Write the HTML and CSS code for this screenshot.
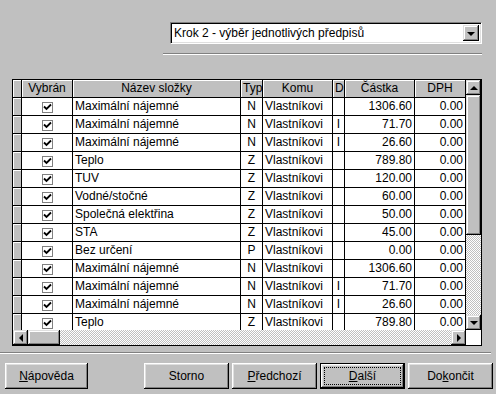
FILE: index.html
```html
<!DOCTYPE html>
<html lang="cs">
<head>
    <meta charset="UTF-8">
    <meta name="viewport" content="width=device-width, initial-scale=1.0">
    <title>Průvodce předpisy</title>
    <link rel="stylesheet" href="styles.css">
</head>
<body>

<div class="combo">
    <span class="combo-text">Krok 2 - výběr jednotlivých předpisů</span>
    <span class="combo-btn"><span class="tri tri-down"></span></span>
</div>
<div class="sep sep-top"></div>

<div class="grid">
    <div class="grid-body" id="grid-body">
        <div class="row head">
            <div class="cell ind"></div>
            <div class="cell">Vybrán</div>
            <div class="cell">Název složky</div>
            <div class="cell">Typ</div>
            <div class="cell">Komu</div>
            <div class="cell">D</div>
            <div class="cell">Částka</div>
            <div class="cell">DPH</div>
        </div>
    </div>
    <div class="vscroll">
        <span class="sbtn"><span class="tri tri-up"></span></span>
        <span class="thumb thumb-v"></span>
        <span class="track"></span>
        <span class="sbtn"><span class="tri tri-down"></span></span>
    </div>
    <div class="hscroll">
        <span class="sbtn"><span class="tri tri-left"></span></span>
        <span class="thumb thumb-h"></span>
        <span class="track"></span>
        <span class="sbtn"><span class="tri tri-right"></span></span>
    </div>
    <div class="corner"></div>
</div>

<div class="sep sep-bottom"></div>

<div class="buttons">
    <button class="btn btn-help"><span class="label"><u>N</u>ápověda</span></button>
    <button class="btn btn-cancel"><span class="label">Storno</span></button>
    <button class="btn"><span class="label"><u>P</u>ředchozí</span></button>
    <button class="btn btn-default"><span class="label"><u>D</u>alší</span></button>
    <button class="btn"><span class="label">Do<u>k</u>ončit</span></button>
</div>

<script>
    const items = [
        { name: 'Maximální nájemné', typ: 'N', d: '', castka: '1306.60' },
        { name: 'Maximální nájemné', typ: 'N', d: 'I', castka: '71.70' },
        { name: 'Maximální nájemné', typ: 'N', d: 'I', castka: '26.60' },
        { name: 'Teplo', typ: 'Z', d: '', castka: '789.80' },
        { name: 'TUV', typ: 'Z', d: '', castka: '120.00' },
        { name: 'Vodné/stočné', typ: 'Z', d: '', castka: '60.00' },
        { name: 'Společná elektřina', typ: 'Z', d: '', castka: '50.00' },
        { name: 'STA', typ: 'Z', d: '', castka: '45.00' },
        { name: 'Bez určení', typ: 'P', d: '', castka: '0.00' },
        { name: 'Maximální nájemné', typ: 'N', d: '', castka: '1306.60' },
        { name: 'Maximální nájemné', typ: 'N', d: 'I', castka: '71.70' },
        { name: 'Maximální nájemné', typ: 'N', d: 'I', castka: '26.60' },
        { name: 'Teplo', typ: 'Z', d: '', castka: '789.80' }
    ];

    const check = '<span class="chk"><svg width="9" height="9" viewBox="0 0 9 9">' +
        '<path d="M1 3.5 L3.5 6 L8 1.5" fill="none" stroke="#000" stroke-width="1.8"/></svg></span>';

    const body = document.getElementById('grid-body');
    items.forEach((item) => {
        const row = document.createElement('div');
        row.className = 'row';
        row.innerHTML = `<div class="cell ind"></div>
            <div class="cell c">${check}</div>
            <div class="cell">${item.name}</div>
            <div class="cell c">${item.typ}</div>
            <div class="cell">Vlastníkovi</div>
            <div class="cell c">${item.d}</div>
            <div class="cell r">${item.castka}</div>
            <div class="cell r">0.00</div>`;
        body.appendChild(row);
    });
</script>

</body>
</html>
```

FILE: styles.css
```css
body {
    font-family: "Liberation Sans", Arial, sans-serif;
    font-size: 12px;
    background-color: #c0c0c0;
    color: #000;
    margin: 0;
    padding: 0;
}

/* combo box */
.combo {
    margin: 22px 0 0 170px;
    width: 312px;
    height: 22px;
    box-sizing: border-box;
    background-color: #fff;
    border-top: 1px solid #808080;
    border-left: 1px solid #808080;
    border-right: 1px solid #fff;
    border-bottom: 1px solid #fff;
    box-shadow: inset 1px 1px #000, inset -1px -1px #dfdfdf;
    display: flex;
    align-items: center;
    padding: 2px;
}
.combo-text {
    flex: 1;
    padding-left: 1px;
}
.combo-btn {
    width: 16px;
    height: 16px;
    box-sizing: border-box;
    background-color: #c0c0c0;
    box-shadow: inset -1px -1px #000, inset 1px 1px #dfdfdf, inset -2px -2px #808080, inset 2px 2px #fff;
    display: flex;
    align-items: center;
    justify-content: center;
}

.sep {
    border-top: 1px solid #808080;
    border-bottom: 1px solid #fff;
}
.sep-top {
    margin: 9px 0 0 163px;
    width: 319px;
}
.sep-bottom {
    margin: 6px 0 0 0;
    width: 491px;
}

/* triangles */
.tri {
    width: 0;
    height: 0;
    border: 4px solid transparent;
}
.tri-down {
    border-top-color: #000;
    border-bottom-width: 0;
    margin-top: 1px;
}
.tri-up {
    border-bottom-color: #000;
    border-top-width: 0;
}
.tri-left {
    border-right-color: #000;
    border-left-width: 0;
}
.tri-right {
    border-left-color: #000;
    border-right-width: 0;
}

/* grid */
.grid {
    margin: 24px 0 0 12px;
    width: 468px;
    border: 1px solid #000;
    display: grid;
    grid-template-columns: 453px 15px;
    grid-template-rows: 250px 15px;
}
.grid-body {
    overflow: hidden;
    background-color: #c0c0c0;
}
.row {
    display: grid;
    grid-template-columns: 9px 51px 168px 22px 70px 12px 70px 51px;
    height: 18px;
}
.cell {
    box-sizing: border-box;
    border-right: 1px solid #000;
    border-bottom: 1px solid #000;
    background-color: #fff;
    padding: 0 2px;
    line-height: 17px;
    white-space: nowrap;
    overflow: hidden;
}
.cell.c {
    text-align: center;
}
.cell.r {
    text-align: right;
}
.head .cell {
    background-color: #c0c0c0;
    text-align: center;
    box-shadow: inset 1px 1px #fff;
}
.cell.ind {
    background-color: #c0c0c0;
    box-shadow: inset 1px 1px #fff;
    padding: 0;
}
.chk {
    display: inline-flex;
    align-items: center;
    justify-content: center;
    width: 11px;
    height: 11px;
    box-sizing: border-box;
    border: 1px solid #808080;
    background-color: #fff;
    vertical-align: -2px;
}

/* scrollbars */
.vscroll, .hscroll {
    display: flex;
}
.vscroll {
    flex-direction: column;
}
.sbtn, .thumb {
    flex: none;
    width: 15px;
    height: 15px;
    box-sizing: border-box;
    background-color: #c0c0c0;
    box-shadow: inset -1px -1px #000, inset 1px 1px #dfdfdf, inset -2px -2px #808080, inset 2px 2px #fff;
    display: flex;
    align-items: center;
    justify-content: center;
}
.thumb-v {
    height: 140px;
}
.thumb-h {
    width: 32px;
}
.track {
    flex: 1;
    background: repeating-conic-gradient(#c0c0c0 0 25%, #fff 0 50%) 0 0 / 2px 2px;
}
.corner {
    background-color: #fff;
}

/* buttons */
.buttons {
    display: flex;
    gap: 3px;
    margin-top: 9px;
    padding-left: 5px;
}
.btn {
    width: 85px;
    height: 26px;
    box-sizing: border-box;
    margin: 0;
    padding: 4px;
    border: none;
    background-color: #c0c0c0;
    font: inherit;
    color: #000;
    box-shadow: inset -1px -1px #000, inset 1px 1px #fff, inset -2px -2px #808080, inset 2px 2px #dfdfdf;
    display: flex;
}
.btn-help {
    width: 83px;
}
.btn-cancel {
    margin-left: 53px;
}
.btn .label {
    flex: 1;
    display: flex;
    align-items: center;
    justify-content: center;
    border: 1px dotted transparent;
}
.btn-default {
    box-shadow: inset 0 0 0 1px #000, inset -2px -2px #000, inset 2px 2px #fff, inset -3px -3px #808080, inset 3px 3px #dfdfdf;
}
.btn-default .label {
    border-color: #000;
}
```
